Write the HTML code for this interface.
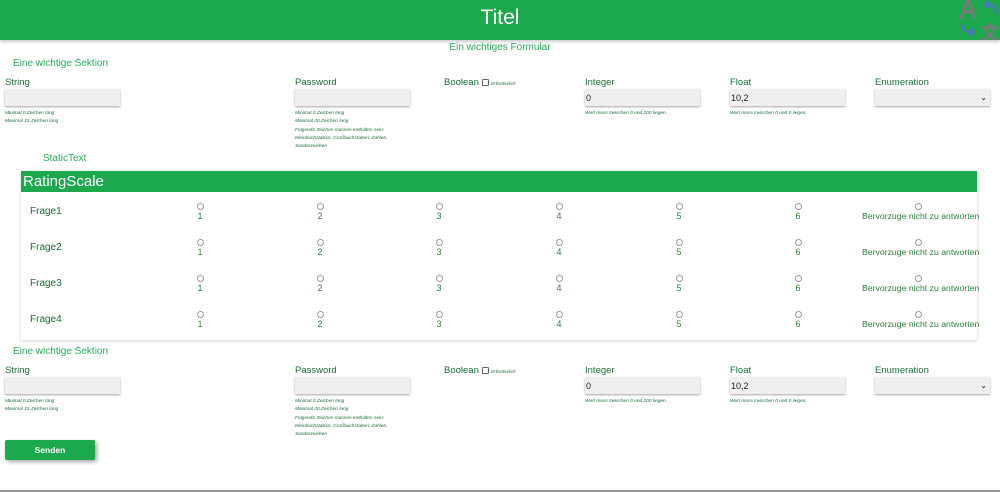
<!DOCTYPE html>
<html><head><meta charset="utf-8"><style>
*{margin:0;padding:0;box-sizing:border-box}
body{width:1000px;height:492px;position:relative;background:#fff;font-family:"Liberation Sans",sans-serif;overflow:hidden}
.a{position:absolute;white-space:nowrap}
.hdr{left:0;top:0;width:1000px;height:40px;background:#1ca84c;box-shadow:0 2px 3px rgba(0,0,0,.2)}
.sec{font-size:10px;color:#2aa85a}
.lbl{font-size:9.5px;color:#1a6b3a}
.inp{width:115px;height:17px;background:#efefef;box-shadow:0 1px 2px rgba(0,0,0,.35);font-size:9px;color:#222;padding:4px 1px}
.hint{font-size:4.8px;font-style:italic;color:#1a6b3a;line-height:8.3px}
.rad{width:7px;height:7px;border:1px solid #999;border-radius:50%}
.num{font-size:9px;color:#2e7d3e;text-align:center;width:20px}
.fr{font-size:10px;color:#1a6b3a}
.bv{font-size:8.7px;color:#2e7d3e}
</style></head><body>
<div class="a hdr"></div>
<div class="a" style="left:0;width:1000px;top:6px;text-align:center;color:#fff;font-size:21px">Titel</div>
<svg class="a" style="left:958px;top:0" width="42" height="40" viewBox="0 0 42 40">
<path d="M3 19 L9 1 L11 1 L17 19 M5.5 12 L14.5 12" stroke="#7a7a7a" stroke-width="3" fill="none"/>
<path d="M38 13 C38 6 32 3 27 5 M27 5 L30 1 M27 5 L31 8" stroke="#4a76c0" stroke-width="2.5" fill="none"/>
<path d="M4 24 C4 31 10 33 16 32 M16 32 L13 28 M16 32 L12 36" stroke="#4a76c0" stroke-width="2.5" fill="none"/>
<text x="22" y="39" font-size="19" font-weight="bold" fill="#7a7a7a" font-family="Noto Sans CJK SC,sans-serif">文</text>
</svg>
<div class="a sec" style="left:0;width:1000px;text-align:center;top:42px">Ein wichtiges Formular</div>

<!-- section 1 -->
<div class="a sec" style="left:13px;top:58px">Eine wichtige Sektion</div>
<div class="a lbl" style="left:5px;top:77px">String</div>
<div class="a lbl" style="left:295px;top:77px">Password</div>
<div class="a lbl" style="left:444px;top:77px">Boolean <span style="display:inline-block;width:7px;height:7px;border:1px solid #666;border-radius:1px;vertical-align:-1px"></span> <span style="font-size:4.8px;font-style:italic">Erforderlich</span></div>
<div class="a lbl" style="left:585px;top:77px">Integer</div>
<div class="a lbl" style="left:730px;top:77px">Float</div>
<div class="a lbl" style="left:875px;top:77px">Enumeration</div>
<div class="a inp" style="left:5px;top:89px"></div>
<div class="a inp" style="left:295px;top:89px"></div>
<div class="a inp" style="left:585px;top:89px">0</div>
<div class="a inp" style="left:730px;top:89px">10,2</div>
<div class="a inp" style="left:875px;top:89px;font-size:8px;text-align:right;padding-right:3px">⌄</div>
<div class="a hint" style="left:5px;top:110px">Minimal 0 Zeichen lang<br>Maximal 15 Zeichen lang</div>
<div class="a hint" style="left:295px;top:110px">Minimal 0 Zeichen lang<br>Maximal 20 Zeichen lang<br>Folgende Zeichen müssen enthalten sein:<br>Kleinbuchstaben, Großbuchstaben, Zahlen,<br>Sonderzeichen</div>
<div class="a hint" style="left:585px;top:110px">Wert muss zwischen 0 und 200 liegen.</div>
<div class="a hint" style="left:730px;top:110px">Wert muss zwischen 0 und 0 liegen.</div>

<div class="a sec" style="left:43px;top:153px">StaticText</div>

<!-- rating -->
<div class="a" style="left:21px;top:171px;width:956px;height:169px;box-shadow:0 1px 3px rgba(0,0,0,.2)"></div>
<div class="a" style="left:21px;top:171px;width:956px;height:21px;background:#1ca84c;color:#fff;font-size:15px;padding:2px 2px">RatingScale</div>

<div class="a fr" style="left:30px;top:206px">Frage1</div>
<div class="a fr" style="left:30px;top:242px">Frage2</div>
<div class="a fr" style="left:30px;top:278px">Frage3</div>
<div class="a fr" style="left:30px;top:314px">Frage4</div>

<div class="a" style="left:0;top:203px;width:1000px;height:20px">
<div class="a rad" style="left:197px;top:0"></div><div class="a num" style="left:190px;top:8px">1</div>
<div class="a rad" style="left:317px;top:0"></div><div class="a num" style="left:310px;top:8px">2</div>
<div class="a rad" style="left:436px;top:0"></div><div class="a num" style="left:429px;top:8px">3</div>
<div class="a rad" style="left:556px;top:0"></div><div class="a num" style="left:549px;top:8px">4</div>
<div class="a rad" style="left:676px;top:0"></div><div class="a num" style="left:669px;top:8px">5</div>
<div class="a rad" style="left:795px;top:0"></div><div class="a num" style="left:788px;top:8px">6</div>
<div class="a rad" style="left:915px;top:0"></div><div class="a bv" style="left:862px;top:8px">Bervorzuge nicht zu antworten</div>
</div>
<div class="a" style="left:0;top:239px;width:1000px;height:20px">
<div class="a rad" style="left:197px;top:0"></div><div class="a num" style="left:190px;top:8px">1</div>
<div class="a rad" style="left:317px;top:0"></div><div class="a num" style="left:310px;top:8px">2</div>
<div class="a rad" style="left:436px;top:0"></div><div class="a num" style="left:429px;top:8px">3</div>
<div class="a rad" style="left:556px;top:0"></div><div class="a num" style="left:549px;top:8px">4</div>
<div class="a rad" style="left:676px;top:0"></div><div class="a num" style="left:669px;top:8px">5</div>
<div class="a rad" style="left:795px;top:0"></div><div class="a num" style="left:788px;top:8px">6</div>
<div class="a rad" style="left:915px;top:0"></div><div class="a bv" style="left:862px;top:8px">Bervorzuge nicht zu antworten</div>
</div>
<div class="a" style="left:0;top:275px;width:1000px;height:20px">
<div class="a rad" style="left:197px;top:0"></div><div class="a num" style="left:190px;top:8px">1</div>
<div class="a rad" style="left:317px;top:0"></div><div class="a num" style="left:310px;top:8px">2</div>
<div class="a rad" style="left:436px;top:0"></div><div class="a num" style="left:429px;top:8px">3</div>
<div class="a rad" style="left:556px;top:0"></div><div class="a num" style="left:549px;top:8px">4</div>
<div class="a rad" style="left:676px;top:0"></div><div class="a num" style="left:669px;top:8px">5</div>
<div class="a rad" style="left:795px;top:0"></div><div class="a num" style="left:788px;top:8px">6</div>
<div class="a rad" style="left:915px;top:0"></div><div class="a bv" style="left:862px;top:8px">Bervorzuge nicht zu antworten</div>
</div>
<div class="a" style="left:0;top:311px;width:1000px;height:20px">
<div class="a rad" style="left:197px;top:0"></div><div class="a num" style="left:190px;top:8px">1</div>
<div class="a rad" style="left:317px;top:0"></div><div class="a num" style="left:310px;top:8px">2</div>
<div class="a rad" style="left:436px;top:0"></div><div class="a num" style="left:429px;top:8px">3</div>
<div class="a rad" style="left:556px;top:0"></div><div class="a num" style="left:549px;top:8px">4</div>
<div class="a rad" style="left:676px;top:0"></div><div class="a num" style="left:669px;top:8px">5</div>
<div class="a rad" style="left:795px;top:0"></div><div class="a num" style="left:788px;top:8px">6</div>
<div class="a rad" style="left:915px;top:0"></div><div class="a bv" style="left:862px;top:8px">Bervorzuge nicht zu antworten</div>
</div>

<!-- section 2 -->
<div class="a sec" style="left:13px;top:346px">Eine wichtige Sektion</div>
<div class="a lbl" style="left:5px;top:365px">String</div>
<div class="a lbl" style="left:295px;top:365px">Password</div>
<div class="a lbl" style="left:444px;top:365px">Boolean <span style="display:inline-block;width:7px;height:7px;border:1px solid #666;border-radius:1px;vertical-align:-1px"></span> <span style="font-size:4.8px;font-style:italic">Erforderlich</span></div>
<div class="a lbl" style="left:585px;top:365px">Integer</div>
<div class="a lbl" style="left:730px;top:365px">Float</div>
<div class="a lbl" style="left:875px;top:365px">Enumeration</div>
<div class="a inp" style="left:5px;top:377px"></div>
<div class="a inp" style="left:295px;top:377px"></div>
<div class="a inp" style="left:585px;top:377px">0</div>
<div class="a inp" style="left:730px;top:377px">10,2</div>
<div class="a inp" style="left:875px;top:377px;font-size:8px;text-align:right;padding-right:3px">⌄</div>
<div class="a hint" style="left:5px;top:398px">Minimal 0 Zeichen lang<br>Maximal 15 Zeichen lang</div>
<div class="a hint" style="left:295px;top:398px">Minimal 0 Zeichen lang<br>Maximal 20 Zeichen lang<br>Folgende Zeichen müssen enthalten sein:<br>Kleinbuchstaben, Großbuchstaben, Zahlen,<br>Sonderzeichen</div>
<div class="a hint" style="left:585px;top:398px">Wert muss zwischen 0 und 200 liegen.</div>
<div class="a hint" style="left:730px;top:398px">Wert muss zwischen 0 und 0 liegen.</div>

<div class="a" style="left:5px;top:440px;width:90px;height:20px;background:#1ca84c;border-radius:2px;box-shadow:2px 2px 4px rgba(0,0,0,.35);color:#fff;font-size:8.5px;font-weight:bold;text-align:center;line-height:20px">Senden</div>
<div class="a" style="left:0;top:490px;width:1000px;height:2px;background:#999"></div>
</body></html>
